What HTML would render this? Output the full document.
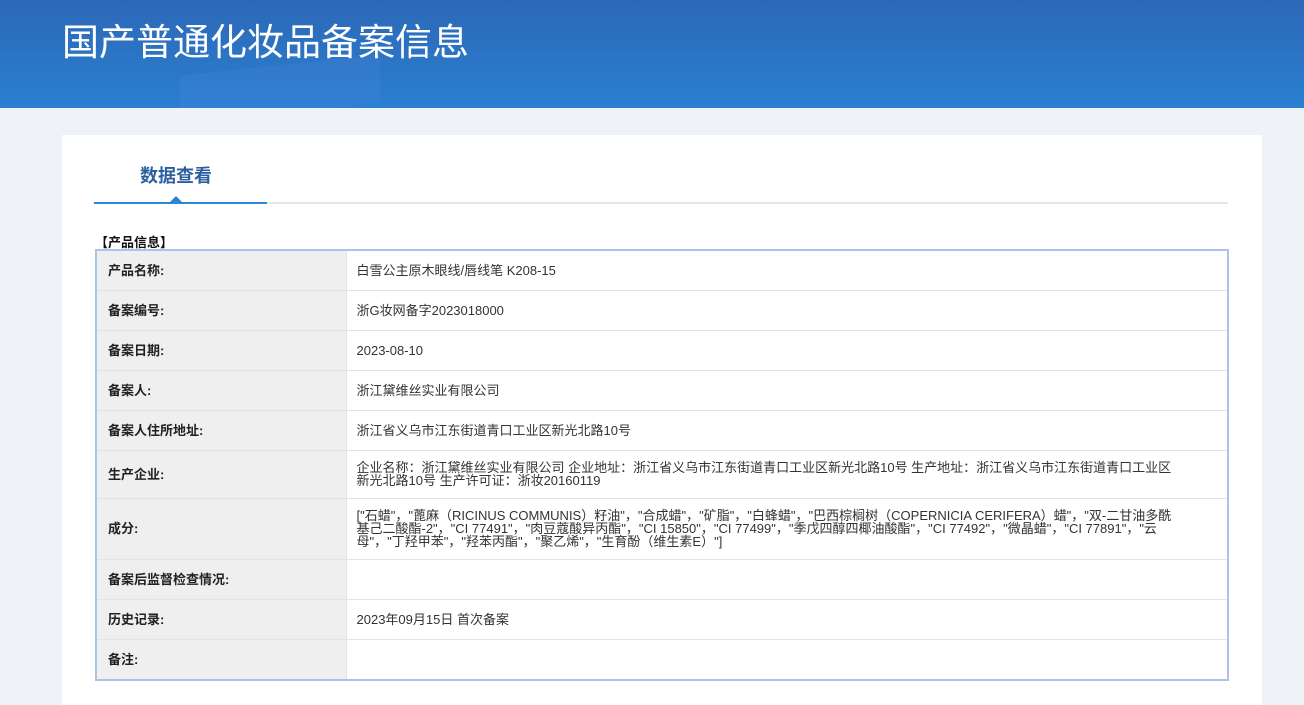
<!DOCTYPE html>
<html><head><meta charset="utf-8"><style>
*{margin:0;padding:0;box-sizing:border-box}
body{width:1304px;height:693px;overflow:hidden;background:#eff3f7;font-family:"Liberation Sans","Noto Sans CJK SC",sans-serif}
.hd{height:108px;background:linear-gradient(180deg,#2d68b8 0%,#2b78c8 70%,#2a80d2 100%);position:relative;overflow:hidden}
.hd h1{position:absolute;left:62px;top:12px;color:#fff;font-weight:normal;font-size:37px}
.hd .b{position:absolute;left:180px;top:65px;width:200px;height:48px;background:rgba(90,140,230,.18);transform:skewY(-6deg)}
.card{position:absolute;left:62px;top:135px;width:1200px;height:570px;background:#fff}
.tab{position:absolute;left:78px;top:27px;font-size:18px;font-weight:bold;color:#2c5f9e}
.line{position:absolute;left:32px;top:67px;width:1134px;height:2px;background:#e4e6e9}
.line i{position:absolute;left:0;top:0;width:173px;height:2px;background:#2a86d6}
.tri{position:absolute;left:108px;top:61px;width:0;height:0;border-left:6px solid transparent;border-right:6px solid transparent;border-bottom:6px solid #2a86d6}
.sec{position:absolute;left:33px;top:97px;font-size:13px;font-weight:bold;color:#111}
table{position:absolute;left:33px;top:114px;width:1134px;border-collapse:collapse;border:2px solid #a9c4e8;font-size:13px;color:#333}
td{border:1px solid #e3e3e3;padding:0 10px;line-height:13px}
td.l{width:250px;background:#efefef;font-weight:bold;color:#222;padding-left:11px}
</style></head><body>
<div class="hd"><div class="b"></div><h1>国产普通化妆品备案信息</h1></div>
<div class="card">
<div class="tab">数据查看</div>
<div class="line"><i></i></div><div class="tri"></div>
<div class="sec">【产品信息】</div>
<table>
<tr style="height:40px"><td class="l">产品名称:</td><td>白雪公主原木眼线/唇线笔 K208-15</td></tr>
<tr style="height:40px"><td class="l">备案编号:</td><td>浙G妆网备字2023018000</td></tr>
<tr style="height:40px"><td class="l">备案日期:</td><td>2023-08-10</td></tr>
<tr style="height:40px"><td class="l">备案人:</td><td>浙江黛维丝实业有限公司</td></tr>
<tr style="height:40px"><td class="l">备案人住所地址:</td><td>浙江省义乌市江东街道青口工业区新光北路10号</td></tr>
<tr style="height:48px"><td class="l">生产企业:</td><td style="padding-right:45px">企业名称：浙江黛维丝实业有限公司 企业地址：浙江省义乌市江东街道青口工业区新光北路10号 生产地址：浙江省义乌市江东街道青口工业区新光北路10号 生产许可证：浙妆20160119</td></tr>
<tr style="height:61px"><td class="l">成分:</td><td style="padding-right:45px">["石蜡"，"蓖麻（RICINUS COMMUNIS）籽油"，"合成蜡"，"矿脂"，"白蜂蜡"，"巴西棕榈树（COPERNICIA CERIFERA）蜡"，"双-二甘油多酰基己二酸酯-2"，"CI 77491"，"肉豆蔻酸异丙酯"，"CI 15850"，"CI 77499"，"季戊四醇四椰油酸酯"，"CI 77492"，"微晶蜡"，"CI 77891"，"云母"，"丁羟甲苯"，"羟苯丙酯"，"聚乙烯"，"生育酚（维生素E）"]</td></tr>
<tr style="height:40px"><td class="l">备案后监督检查情况:</td><td></td></tr>
<tr style="height:40px"><td class="l">历史记录:</td><td>2023年09月15日 首次备案</td></tr>
<tr style="height:41px"><td class="l">备注:</td><td></td></tr>
</table>
</div>
</body></html>
